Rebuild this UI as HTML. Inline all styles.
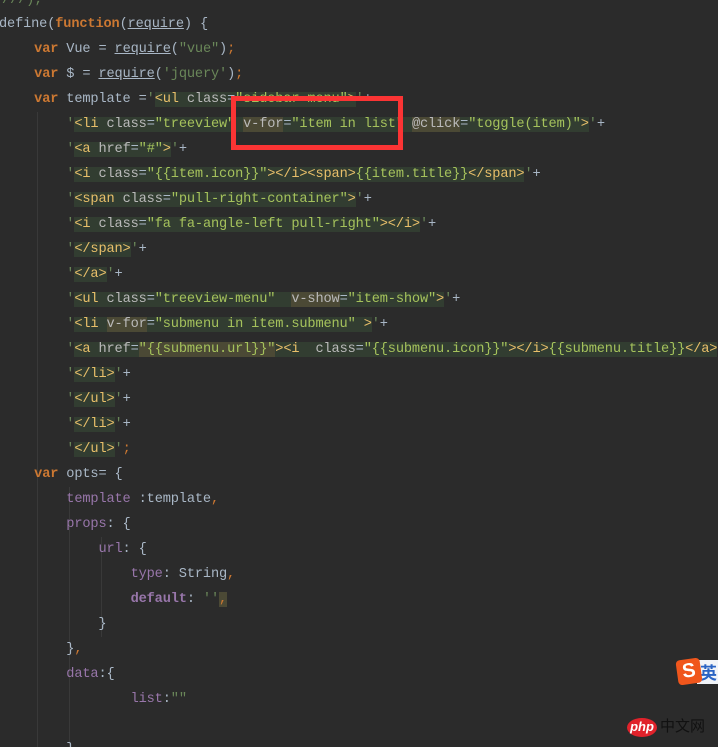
<!DOCTYPE html>
<html><head><meta charset="utf-8"><style>
html,body{margin:0;padding:0;background:#2b2b2b;width:718px;height:747px;overflow:hidden;position:relative}
.l{position:absolute;left:2px;height:25px;line-height:25px;white-space:pre;font-family:"Liberation Mono","Noto Sans CJK SC",monospace;font-size:13.65px;letter-spacing:-0.15px;color:#a9b7c6}
.k{color:#cc7832;font-weight:bold}
.s{color:#6a8759}
.t{color:#e8bf6a}
.a{color:#bababa}
.v{color:#a5c25c}
.p{color:#9876aa}
.g{background:#323d31}
.h{background:#4b4935}
.u{text-decoration:underline}
.guide{position:absolute;width:1px;background:#393939}
</style></head><body>
<div class="guide" style="left:37px;top:112px;height:635px"></div>
<div class="guide" style="left:69px;top:487px;height:260px"></div>
<div class="guide" style="left:101px;top:537px;height:100px"></div>
<div class="l" style="top:-12px;left:-6px"><span class="s">////);</span></div>
<div class="l" style="top:12px;left:-1px">define(<span class="k">function</span>(<span class="u">require</span>) {</div>
<div class="l" style="top:37px">    <span class="k">var</span> Vue = <span class="u">require</span>(<span class="s">"vue"</span>)<span class="k" style="font-weight:normal">;</span></div>
<div class="l" style="top:62px">    <span class="k">var</span> $ = <span class="u">require</span>(<span class="s">'jquery'</span>)<span class="k" style="font-weight:normal">;</span></div>
<div class="l" style="top:87px">    <span class="k">var</span> template =<span class="s">'</span><span class="g"><span class="t">&lt;ul</span> <span class="a">class</span>=<span class="v">"sidebar-menu"</span><span class="t">&gt;</span></span><span class="s">'</span>+</div>
<div class="l" style="top:112px">        <span class="s">'</span><span class="g"><span class="t">&lt;li</span> <span class="a">class</span>=<span class="v">"treeview"</span> <span class="a h">v-for</span>=<span class="v">"item in list"</span> <span class="a h">@click</span>=<span class="v">"toggle(item)"</span><span class="t">&gt;</span></span><span class="s">'</span>+</div>
<div class="l" style="top:137px">        <span class="s">'</span><span class="g"><span class="t">&lt;a</span> <span class="a">href</span>=<span class="v">"#"</span><span class="t">&gt;</span></span><span class="s">'</span>+</div>
<div class="l" style="top:162px">        <span class="s">'</span><span class="g"><span class="t">&lt;i</span> <span class="a">class</span>=<span class="v">"{{item.icon}}"</span><span class="t">&gt;&lt;/i&gt;&lt;span&gt;</span><span class="v">{{item.title}}</span><span class="t">&lt;/span&gt;</span></span><span class="s">'</span>+</div>
<div class="l" style="top:187px">        <span class="s">'</span><span class="g"><span class="t">&lt;span</span> <span class="a">class</span>=<span class="v">"pull-right-container"</span><span class="t">&gt;</span></span><span class="s">'</span>+</div>
<div class="l" style="top:212px">        <span class="s">'</span><span class="g"><span class="t">&lt;i</span> <span class="a">class</span>=<span class="v">"fa fa-angle-left pull-right"</span><span class="t">&gt;&lt;/i&gt;</span></span><span class="s">'</span>+</div>
<div class="l" style="top:237px">        <span class="s">'</span><span class="g"><span class="t">&lt;/span&gt;</span></span><span class="s">'</span>+</div>
<div class="l" style="top:262px">        <span class="s">'</span><span class="g"><span class="t">&lt;/a&gt;</span></span><span class="s">'</span>+</div>
<div class="l" style="top:287px">        <span class="s">'</span><span class="g"><span class="t">&lt;ul</span> <span class="a">class</span>=<span class="v">"treeview-menu"</span>  <span class="a h">v-show</span>=<span class="v">"item-show"</span><span class="t">&gt;</span></span><span class="s">'</span>+</div>
<div class="l" style="top:312px">        <span class="s">'</span><span class="g"><span class="t">&lt;li</span> <span class="a h">v-for</span>=<span class="v">"submenu in item.submenu"</span> <span class="t">&gt;</span></span><span class="s">'</span>+</div>
<div class="l" style="top:337px">        <span class="s">'</span><span class="g"><span class="t">&lt;a</span> <span class="a">href</span>=<span class="v h">"{{submenu.url}}"</span><span class="t">&gt;&lt;i</span>  <span class="a">class</span>=<span class="v">"{{submenu.icon}}"</span><span class="t">&gt;&lt;/i&gt;</span><span class="v">{{submenu.title}}</span><span class="t">&lt;/a&gt;</span></span><span class="s">'</span></div>
<div class="l" style="top:362px">        <span class="s">'</span><span class="g"><span class="t">&lt;/li&gt;</span></span><span class="s">'</span>+</div>
<div class="l" style="top:387px">        <span class="s">'</span><span class="g"><span class="t">&lt;/ul&gt;</span></span><span class="s">'</span>+</div>
<div class="l" style="top:412px">        <span class="s">'</span><span class="g"><span class="t">&lt;/li&gt;</span></span><span class="s">'</span>+</div>
<div class="l" style="top:437px">        <span class="s">'</span><span class="g"><span class="t">&lt;/ul&gt;</span></span><span class="s">'</span><span class="k" style="font-weight:normal">;</span></div>
<div class="l" style="top:462px">    <span class="k">var</span> opts= {</div>
<div class="l" style="top:487px">        <span class="p">template</span> :template<span class="k" style="font-weight:normal">,</span></div>
<div class="l" style="top:512px">        <span class="p">props</span>: {</div>
<div class="l" style="top:537px">            <span class="p">url</span>: {</div>
<div class="l" style="top:562px">                <span class="p">type</span>: String<span class="k" style="font-weight:normal">,</span></div>
<div class="l" style="top:587px">                <span class="p" style="font-weight:bold">default</span>: <span class="s">''</span><span class="k h" style="font-weight:normal">,</span></div>
<div class="l" style="top:612px">            }</div>
<div class="l" style="top:637px">        }<span class="k" style="font-weight:normal">,</span></div>
<div class="l" style="top:662px">        <span class="p">data</span>:{</div>
<div class="l" style="top:687px">                <span class="p">list</span>:<span class="s">""</span></div>
<div class="l" style="top:737px">        }</div>
<div style="position:absolute;left:231px;top:96px;width:162px;height:44px;border:5px solid #fb3434"></div>
<div style="position:absolute;left:697px;top:660px;width:21px;height:24px;background:#f1f4f8"></div>
<div style="position:absolute;left:700px;top:662px;font:bold 17px 'Noto Sans CJK SC',sans-serif;color:#2a64c4;line-height:20px">英</div>
<div style="position:absolute;left:677px;top:659px;width:24px;height:25px;background:#f0561c;border-radius:4px;transform:rotate(-8deg);color:#fff;font:bold 20px 'Liberation Sans',sans-serif;text-align:center;line-height:25px">S</div>
<div style="position:absolute;left:627px;top:718px;width:30px;height:19px;background:#e0222b;border-radius:50%;color:#fff;font:italic bold 13px 'Liberation Sans',sans-serif;text-align:center;line-height:17px">php</div>
<div style="position:absolute;left:660px;top:716px;font:15px 'Noto Sans CJK SC',sans-serif;color:#111;line-height:20px">中文网</div>
</body></html>
